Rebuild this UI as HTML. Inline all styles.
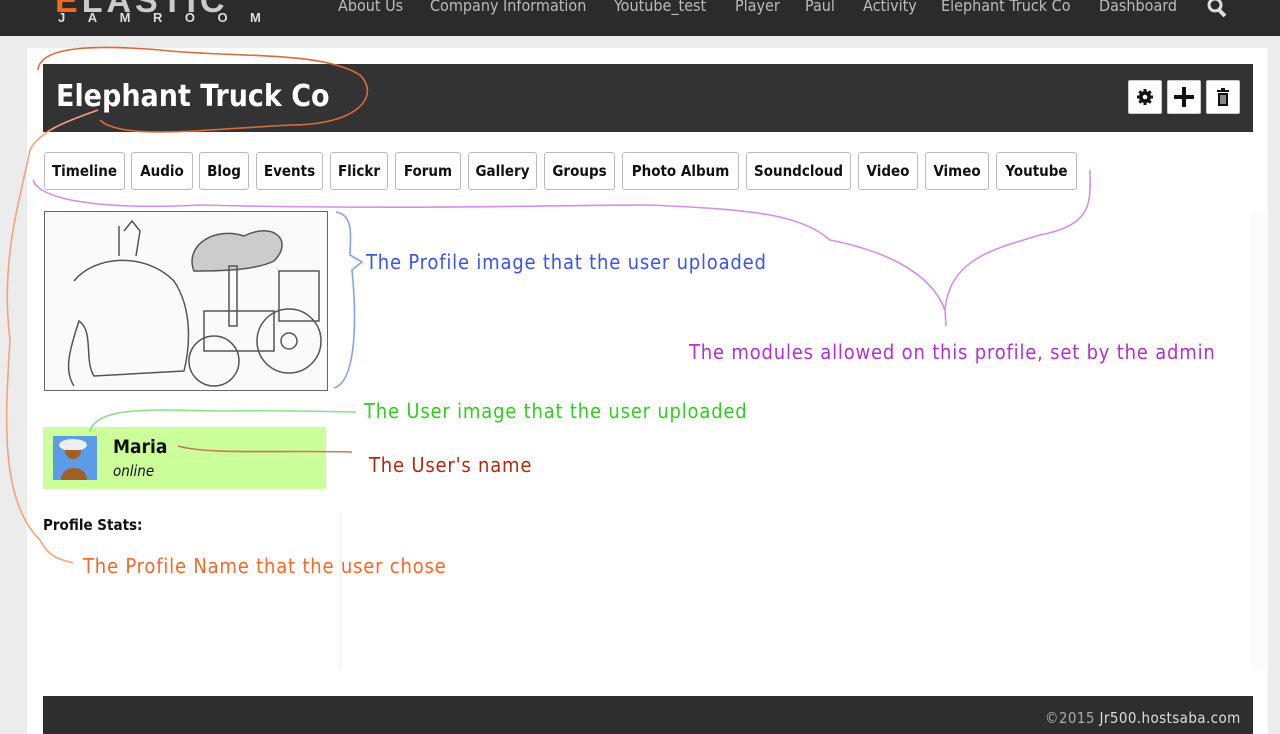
<!DOCTYPE html>
<html><head><meta charset="utf-8">
<style>
*{margin:0;padding:0;box-sizing:border-box}
body{width:1280px;height:734px;overflow:hidden;background:#ececec;font-family:"DejaVu Sans Condensed","Liberation Sans",sans-serif;position:relative}
.a{position:absolute;white-space:nowrap}
#top{left:0;top:0;width:1280px;height:36px;background:#2b2b2b}
.nav{top:-4px;color:#bbb;font-size:16px}
#panel{left:27px;top:48px;width:1241px;height:686px;background:#fff}
#title{left:43px;top:64px;width:1210px;height:68px;background:#333}
.ib{top:80px;width:34px;height:34px;background:#fff;border:1px solid #ccc;border-radius:2px;display:flex;align-items:center;justify-content:center}
.tab{top:152px;height:38px;border:1px solid #bbb;border-radius:3px;font-weight:bold;font-size:15px;display:flex;align-items:center;justify-content:center;color:#111;background:#fff}
.ann{font-size:20px;letter-spacing:0.8px}
#foot{left:43px;top:696px;width:1210px;height:38px;background:#2e2e2e}
</style></head><body>
<div class="a" id="top"></div>
<div class="a" style="left:55px;top:-18px;font:bold 34px 'Liberation Sans',sans-serif;color:#ccc;letter-spacing:4px"><span style="color:#f26a1b">E</span>LASTIC</div>
<div class="a" style="left:58px;top:10px;font:bold 13px 'Liberation Sans',sans-serif;color:#ddd;letter-spacing:22.5px">JAMROOM</div>
<div class="a nav" style="left:338px">About Us</div>
<div class="a nav" style="left:430px">Company Information</div>
<div class="a nav" style="left:614px">Youtube_test</div>
<div class="a nav" style="left:735px">Player</div>
<div class="a nav" style="left:805px">Paul</div>
<div class="a nav" style="left:863px">Activity</div>
<div class="a nav" style="left:941px">Elephant Truck Co</div>
<div class="a nav" style="left:1099px">Dashboard</div>
<svg class="a" style="left:1206px;top:0" width="24" height="18"><circle cx="9" cy="5" r="6" fill="none" stroke="#ddd" stroke-width="3"/><line x1="13" y1="10" x2="19" y2="16" stroke="#ddd" stroke-width="4"/></svg>
<div class="a" id="panel"></div>
<div class="a" id="title"></div>
<div class="a" style="left:56px;top:79px;font-size:30px;font-weight:bold;color:#fff">Elephant Truck Co</div>
<div class="a ib" style="left:1128px"><svg width="18" height="18" viewBox="0 0 18 18"><g fill="#111"><circle cx="9" cy="9" r="6"/><rect x="7.5" y="1" width="3" height="16"/><rect x="1" y="7.5" width="16" height="3"/><rect x="7.5" y="1" width="3" height="16" transform="rotate(45 9 9)"/><rect x="7.5" y="1" width="3" height="16" transform="rotate(-45 9 9)"/></g><circle cx="9" cy="9" r="2.3" fill="#fff"/></svg></div>
<div class="a ib" style="left:1167px"><svg width="22" height="22"><rect x="9" y="1" width="4" height="20" fill="#111"/><rect x="1" y="9" width="20" height="4" fill="#111"/></svg></div>
<div class="a ib" style="left:1206px"><svg width="16" height="20"><rect x="2" y="3" width="12" height="2" fill="#111"/><rect x="6" y="1" width="4" height="2" fill="#111"/><rect x="3" y="6" width="10" height="13" fill="#111"/><g stroke="#fff"><line x1="6" y1="8" x2="6" y2="17"/><line x1="8" y1="8" x2="8" y2="17"/><line x1="10" y1="8" x2="10" y2="17"/></g></svg></div>
<div class="a tab" style="left:44px;width:81px">Timeline</div>
<div class="a tab" style="left:131px;width:62px">Audio</div>
<div class="a tab" style="left:199px;width:50px">Blog</div>
<div class="a tab" style="left:256px;width:67px">Events</div>
<div class="a tab" style="left:330px;width:58px">Flickr</div>
<div class="a tab" style="left:395px;width:66px">Forum</div>
<div class="a tab" style="left:468px;width:69px">Gallery</div>
<div class="a tab" style="left:544px;width:71px">Groups</div>
<div class="a tab" style="left:622px;width:117px">Photo Album</div>
<div class="a tab" style="left:746px;width:105px">Soundcloud</div>
<div class="a tab" style="left:858px;width:60px">Video</div>
<div class="a tab" style="left:925px;width:64px">Vimeo</div>
<div class="a tab" style="left:996px;width:81px">Youtube</div>
<svg class="a" style="left:44px;top:211px" width="284" height="180" viewBox="0 0 284 180">
<rect x="0.5" y="0.5" width="283" height="179" fill="#fafafa" stroke="#666"/>
<g fill="none" stroke="#555" stroke-width="1.5">
<path d="M30 70 C50 45 100 40 130 70 C150 100 145 140 140 160 L50 165 C40 150 50 120 35 110 C25 140 20 160 30 175"/>
<path d="M80 20 l8 -10 l8 10 l-4 25 M75 15 l0 30"/>
<path d="M150 60 C140 35 170 15 200 25 C230 10 250 30 230 50 C210 60 170 60 150 60Z" fill="#ccc"/>
<rect x="185" y="55" width="8" height="60"/><rect x="160" y="100" width="70" height="40"/>
<circle cx="245" cy="130" r="32"/><circle cx="245" cy="130" r="8"/>
<rect x="235" y="60" width="40" height="50"/><circle cx="170" cy="150" r="25"/>
</g></svg>
<div class="a" style="left:43px;top:427px;width:283px;height:62px;background:#ccff99"></div>
<svg class="a" style="left:53px;top:436px" width="44" height="44"><rect width="44" height="44" fill="#5b9be8"/><ellipse cx="20" cy="9" rx="14" ry="6" fill="#eee"/><path d="M12 14 C12 26 28 26 28 14Z" fill="#a0602a"/><path d="M8 44 C8 28 34 28 34 44Z" fill="#a0602a"/></svg>
<div class="a" style="left:113px;top:436px;font-size:19px;font-weight:bold;color:#111">Maria</div>
<div class="a" style="left:113px;top:462px;font-size:15px;font-style:italic;color:#111">online</div>
<div class="a" style="left:43px;top:516px;font-size:15px;font-weight:bold;color:#111">Profile Stats:</div>
<div class="a" style="left:339px;top:512px;width:3px;height:158px;background:#f8f8f8"></div>
<div class="a" style="left:1251px;top:212px;width:16px;height:458px;background:#fbfbfb"></div>
<svg class="a" style="left:0;top:0" width="1280" height="734" fill="none" stroke-width="1.6">
<path d="M38 70 C40 45 100 45 160 50 C230 58 320 50 360 75 C380 95 360 125 290 125 C200 130 120 140 100 120" stroke="#d96a3a"/>
<path d="M98 110 C70 120 40 130 30 150 C20 200 0 260 10 340 C5 420 0 500 40 540 C50 560 65 560 73 563" stroke="#f8a27a"/>
<path d="M33 180 C40 200 100 210 200 205 C400 210 560 205 650 205 C760 210 800 215 830 240 C880 250 930 270 945 310 L946 326 M945 310 C950 260 990 250 1040 235 C1095 225 1090 200 1090 170" stroke="#d58ee8"/>
<path d="M336 212 C355 215 350 240 350 255 L362 262 L352 270 C355 300 360 380 334 388" stroke="#8aa0f0"/>
<path d="M90 432 C95 405 160 410 220 411 C300 410 340 412 356 412" stroke="#8de08a"/>
<path d="M178 446 C210 455 280 450 352 452" stroke="#c77a5a"/>
</svg>
<div class="a ann" style="left:366px;top:250px;color:#3a55e8">The Profile image that the user uploaded</div>
<div class="a ann" style="left:689px;top:340px;color:#b030d0">The modules allowed on this profile, set by the admin</div>
<div class="a ann" style="left:364px;top:399px;color:#33cc22">The User image that the user uploaded</div>
<div class="a ann" style="left:369px;top:453px;color:#b02a10">The User's name</div>
<div class="a ann" style="left:83px;top:554px;color:#f26a2a">The Profile Name that the user chose</div>
<div class="a" id="foot"></div>
<div class="a" style="left:1045px;top:709px;font-size:15px;color:#aaa;letter-spacing:0.4px">©2015 <span style="color:#ddd">Jr500.hostsaba.com</span></div>
</body></html>
